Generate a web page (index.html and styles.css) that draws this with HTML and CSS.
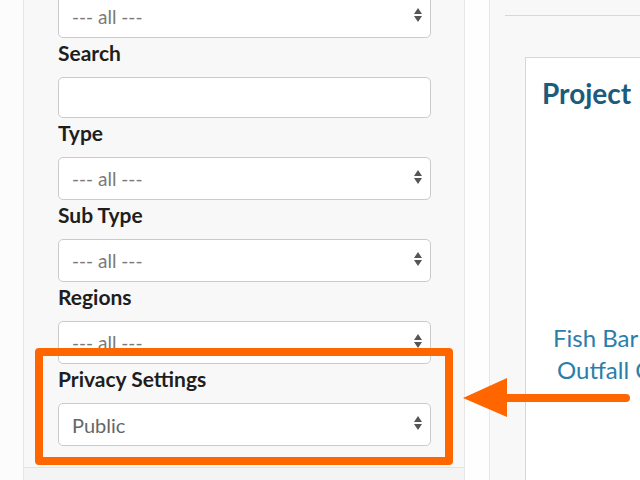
FILE: index.html
```html
<!DOCTYPE html>
<html lang="en">
<head>
    <meta charset="UTF-8">
    <meta name="viewport" content="width=device-width, initial-scale=1.0">
    <title>Projects - Filters</title>
    <link rel="stylesheet" href="styles.css">
</head>
<body>

    <div class="page">
        <!-- Sidebar with filters -->
        <aside class="sidebar">
            <form class="filters">
                <div class="select-wrap">
                    <select class="field"><option>--- all ---</option></select>
                    <svg class="select-arrows" width="8" height="14" viewBox="0 0 8 14"><path d="M4 0L8 6H0z M0 8H8L4 14z" fill="#555"/></svg>
                </div>

                <label class="filter-label" for="search">Search</label>
                <input class="field field-input" type="text" id="search">

                <label class="filter-label" for="type">Type</label>
                <div class="select-wrap">
                    <select class="field" id="type"><option>--- all ---</option></select>
                    <svg class="select-arrows" width="8" height="14" viewBox="0 0 8 14"><path d="M4 0L8 6H0z M0 8H8L4 14z" fill="#555"/></svg>
                </div>

                <label class="filter-label" for="subtype">Sub Type</label>
                <div class="select-wrap">
                    <select class="field" id="subtype"><option>--- all ---</option></select>
                    <svg class="select-arrows" width="8" height="14" viewBox="0 0 8 14"><path d="M4 0L8 6H0z M0 8H8L4 14z" fill="#555"/></svg>
                </div>

                <label class="filter-label" for="regions">Regions</label>
                <div class="select-wrap">
                    <select class="field" id="regions"><option>--- all ---</option></select>
                    <svg class="select-arrows" width="8" height="14" viewBox="0 0 8 14"><path d="M4 0L8 6H0z M0 8H8L4 14z" fill="#555"/></svg>
                </div>

                <label class="filter-label" for="privacy">Privacy Settings</label>
                <div class="select-wrap">
                    <select class="field field-dark" id="privacy"><option>Public</option><option>Private</option></select>
                    <svg class="select-arrows" width="8" height="14" viewBox="0 0 8 14"><path d="M4 0L8 6H0z M0 8H8L4 14z" fill="#555"/></svg>
                </div>
            </form>
            <div class="sidebar-foot"></div>
        </aside>

        <div class="gutter"></div>

        <!-- Main content -->
        <main class="main">
            <hr class="main-rule">
            <div class="card">
                <h2 class="card-title">Project</h2>
                <div class="card-links">
                    <a href="#" class="project-link">Fish Bar</a>
                    <a href="#" class="project-link link-indent">Outfall C</a>
                </div>
            </div>
        </main>
    </div>

    <!-- Annotation overlay -->
    <div class="highlight-box"></div>
    <svg class="pointer-arrow" width="170" height="50" viewBox="0 0 170 50">
        <path d="M44 28H163" stroke="#ff6600" stroke-width="8" stroke-linecap="round"/>
        <path d="M0 28L44 8V47z" fill="#ff6600"/>
    </svg>

</body>
</html>
```

FILE: styles.css
```css
html, body {
    margin: 0;
    padding: 0;
    overflow: hidden;
}
body {
    font-family: 'Lato', 'Open Sans', sans-serif;
    background-color: #fcfcfc;
    height: 480px;
}
.page {
    display: flex;
    width: 1000px;
    height: 480px;
}
.sidebar {
    flex-shrink: 0;
    margin-left: 23px;
    width: 440px;
    border-left: 1px solid #e6e6e6;
    border-right: 1px solid #e6e6e6;
    background-color: #f8f8f8;
    display: flex;
    flex-direction: column;
}
.filters {
    display: flex;
    flex-direction: column;
    margin-top: -5px;
    padding: 0 33px 21px 34px;
    border-bottom: 1px solid #e3e3e3;
}
.filter-label {
    display: block;
    font-size: 21px;
    font-weight: bold;
    line-height: 24px;
    color: #1e1e1e;
    padding-top: 3px;
    margin-bottom: 12px;
}
.field {
    box-sizing: border-box;
    width: 100%;
    height: 43px;
    margin: 0;
    padding: 0 30px 0 13px;
    border: 1px solid #cbcbcb;
    border-radius: 5px;
    background-color: white;
    font-family: 'Lato', sans-serif;
    font-size: 19px;
    color: #7a7a7a;
    -webkit-appearance: none;
    appearance: none;
    outline: none;
}
.field-input {
    height: 41px;
}
.field-dark {
    font-size: 20px;
    color: #666;
}
.select-wrap {
    position: relative;
}
.select-arrows {
    position: absolute;
    right: 9px;
    top: 50%;
    margin-top: -9px;
}
.sidebar-foot {
    flex: 1;
    background-color: #f4f4f4;
}
.gutter {
    flex-shrink: 0;
    width: 24px;
    background-color: #fefefe;
}
.main {
    flex-shrink: 0;
    width: 400px;
    border-left: 1px solid #e6e6e6;
    background-color: #f8f8f8;
    padding-left: 15px;
}
.main-rule {
    border: none;
    border-top: 1px solid #d8d8d8;
    margin: 15px 0 0 0;
}
.card {
    margin: 41px 0 0 20px;
    background-color: white;
    border: 1px solid #c9dae5;
    height: 500px;
    padding: 0 16px;
}
.card-title {
    margin: 18px 0 0 0;
    font-size: 28px;
    line-height: 34px;
    color: #1b5b7d;
}
.card-links {
    display: flex;
    flex-direction: column;
    align-items: flex-start;
    margin-top: 212px;
    padding-left: 11px;
}
.project-link {
    font-size: 24px;
    line-height: 32px;
    color: #2b7ea9;
    text-decoration: none;
    white-space: nowrap;
}
.link-indent {
    padding-left: 4px;
}
.highlight-box {
    position: absolute;
    left: 35px;
    top: 348px;
    width: 402px;
    height: 101px;
    border: 8px solid #ff6600;
    border-radius: 4px;
}
.pointer-arrow {
    position: absolute;
    left: 463px;
    top: 370px;
}
```
